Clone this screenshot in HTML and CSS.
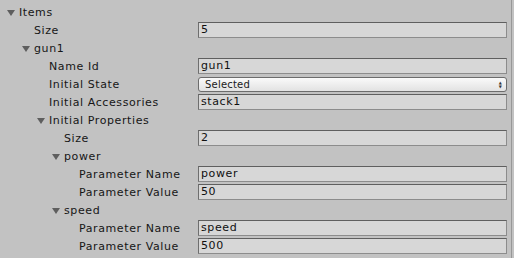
FILE: index.html
```html
<!DOCTYPE html>
<html lang="en">

<head>
    <meta charset="utf-8">
    <title>Inspector</title>
    <link rel="stylesheet" href="styles.css">
</head>

<body>
    <div class="inspector">
        <div class="row lvl0 fold"><span class="arrow"></span><span class="label">Items</span></div>
        <div class="row lvl1"><span class="label">Size</span><div class="field">5</div></div>
        <div class="row lvl1 fold"><span class="arrow"></span><span class="label">gun1</span></div>
        <div class="row lvl2"><span class="label">Name Id</span><div class="field">gun1</div></div>
        <div class="row lvl2"><span class="label">Initial State</span>
            <div class="popup"><span>Selected</span><span class="updown">&#9650;<br>&#9660;</span></div>
        </div>
        <div class="row lvl2"><span class="label">Initial Accessories</span><div class="field">stack1</div></div>
        <div class="row lvl2 fold"><span class="arrow"></span><span class="label">Initial Properties</span></div>
        <div class="row lvl3"><span class="label">Size</span><div class="field">2</div></div>
        <div class="row lvl3 fold"><span class="arrow"></span><span class="label">power</span></div>
        <div class="row lvl4"><span class="label">Parameter Name</span><div class="field">power</div></div>
        <div class="row lvl4"><span class="label">Parameter Value</span><div class="field">50</div></div>
        <div class="row lvl3 fold"><span class="arrow"></span><span class="label">speed</span></div>
        <div class="row lvl4"><span class="label">Parameter Name</span><div class="field">speed</div></div>
        <div class="row lvl4"><span class="label">Parameter Value</span><div class="field">500</div></div>
    </div>
</body>

</html>
```

FILE: styles.css
```css
body {
    margin: 0;
    background-color: #c2c2c2;
    font-family: 'DejaVu Sans', sans-serif;
    font-size: 11px;
    letter-spacing: 0.6px;
    color: #161616;
}

.inspector {
    width: 512px;
    height: 258px;
    box-sizing: border-box;
    padding-top: 3px;
    border-right: 1px solid #989898;
}

.row {
    display: flex;
    align-items: center;
    height: 18px;
    padding-right: 4px;
}

.label {
    flex: none;
}

/* indent 15px for each level, label starts at 19 */
.lvl0 { padding-left: 7px; }
.lvl1 { padding-left: 22px; }
.lvl2 { padding-left: 37px; }
.lvl3 { padding-left: 52px; }
.lvl4 { padding-left: 67px; }

.lvl1 .label:first-child,
.lvl2 .label:first-child,
.lvl3 .label:first-child,
.lvl4 .label:first-child {
    margin-left: 12px;
}

.lvl1 .label:first-child { width: 164px; }
.lvl2 .label:first-child { width: 149px; }
.lvl3 .label:first-child { width: 134px; }
.lvl4 .label:first-child { width: 119px; }

.arrow {
    width: 0;
    height: 0;
    border-left: 4px solid transparent;
    border-right: 4px solid transparent;
    border-top: 6px solid #5e5e5e;
    margin-right: 4px;
    margin-top: 1px;
}

.field {
    flex: 1;
    height: 16px;
    box-sizing: border-box;
    background-color: #d7d7d7;
    border: 1px solid #8c8c8c;
    border-top-color: #5f5f5f;
    border-left-color: #6e6e6e;
    padding-left: 2px;
    line-height: 14px;
    color: #101010;
}

.popup {
    flex: 1;
    height: 15px;
    margin-top: 1px;
    box-sizing: border-box;
    display: flex;
    justify-content: space-between;
    align-items: center;
    padding: 0 4px 0 6px;
    border: 1px solid #6c6c6c;
    border-radius: 3px;
    background: linear-gradient(#fafafa, #e2e2e2);
    font-size: 10px;
    letter-spacing: 0.2px;
    color: #1a1a1a;
}

.updown {
    font-size: 4px;
    line-height: 4px;
    text-align: center;
    color: #333;
}
```
